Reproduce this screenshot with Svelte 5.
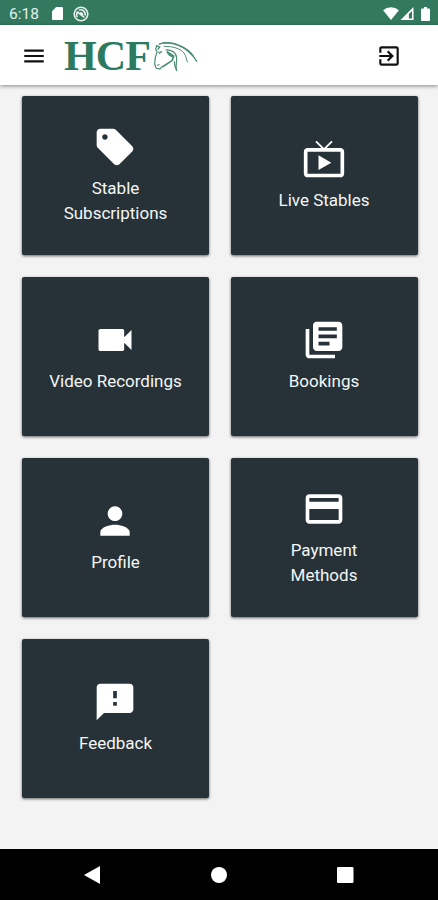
<script>
    const tiles = [
        {
            label: 'Stable Subscriptions',
            icon: 'M21.41 11.58l-9-9C12.05 2.22 11.55 2 11 2H4c-1.1 0-2 .9-2 2v7c0 .55.22 1.05.59 1.42l9 9c.36.36.86.58 1.41.58.55 0 1.05-.22 1.41-.59l7-7c.37-.36.59-.86.59-1.41 0-.55-.23-1.06-.59-1.42zM6.5 8C5.67 8 5 7.33 5 6.5S5.67 5 6.5 5 8 5.67 8 6.5 7.33 8 6.5 8z'
        },
        {
            label: 'Live Stables',
            icon: 'M21 6h-7.59l3.29-3.29L16 2l-4 4-4-4-.7.71L10.59 6H3c-1.1 0-2 .89-2 2v12c0 1.1.9 2 2 2h18c1.1 0 2-.9 2-2V8c0-1.11-.9-2-2-2zm0 14H3V8h18v12zM9 10v8l7-4z'
        },
        {
            label: 'Video Recordings',
            icon: 'M17 10.5V7c0-.55-.45-1-1-1H4c-.55 0-1 .45-1 1v10c0 .55.45 1 1 1h12c.55 0 1-.45 1-1v-3.5l4 4v-11l-4 4z'
        },
        {
            label: 'Bookings',
            icon: 'M4 6H2v14c0 1.1.9 2 2 2h14v-2H4V6zm16-4H8c-1.1 0-2 .9-2 2v12c0 1.1.9 2 2 2h12c1.1 0 2-.9 2-2V4c0-1.1-.9-2-2-2zm-1 9H9V9h10v2zm-4 4H9v-2h6v2zm4-8H9V5h10v2z'
        },
        {
            label: 'Profile',
            icon: 'M12 12c2.21 0 4-1.79 4-4s-1.79-4-4-4-4 1.79-4 4 1.79 4 4 4zm0 2c-2.67 0-8 1.34-8 4v2h16v-2c0-2.66-5.33-4-8-4z'
        },
        {
            label: 'Payment Methods',
            icon: 'M20 4H4c-1.11 0-1.99.89-1.99 2L2 18c0 1.11.89 2 2 2h16c1.11 0 2-.89 2-2V6c0-1.11-.89-2-2-2zm0 14H4v-6h16v6zm0-10H4V6h16v2z'
        },
        {
            label: 'Feedback',
            icon: 'M20 2H4c-1.1 0-1.99.9-1.99 2L2 22l4-4h14c1.1 0 2-.9 2-2V4c0-1.1-.9-2-2-2zm-7 12h-2v-2h2v2zm0-4h-2V6h2v4z'
        }
    ];
</script>

<div class="screen">
    <div class="status">
        <span class="time">6:18</span>
        <svg class="sd" width="11" height="13" viewBox="0 0 12 14"><path d="M4.5 0H11q1 0 1 1v12q0 1-1 1H1q-1 0-1-1V4.5z"/></svg>
        <svg class="sync" width="16" height="16" viewBox="0 0 16 16">
            <circle cx="8" cy="8" r="6.8"/>
            <path d="M4.6 11A4.3 4.3 0 0 1 4.4 6l7 5.4M6 4.3A4.3 4.3 0 0 1 12 9.4M7 7.2a1.7 1.7 0 0 1 2.6 1.7"/>
        </svg>
        <span class="spacer"></span>
        <svg width="16" height="13" viewBox="0 0 17 14"><path d="M8.5 14L0 3.6Q3.5.4 8.5.4T17 3.6z"/></svg>
        <svg class="signal" width="14" height="13" viewBox="0 0 14 14"><path d="M14 0v14H0zM12.4 4.2L9 7.6v4.8h3.4z" fill-rule="evenodd"/></svg>
        <svg class="battery" width="9" height="14" viewBox="0 0 9 14"><path d="M3 0h3v1.5h2q1 0 1 1V13q0 1-1 1H1q-1 0-1-1V2.5q0-1 1-1h2z"/></svg>
    </div>

    <header>
        <button aria-label="Menu">
            <svg width="26" height="26" viewBox="0 0 24 24"><path d="M3 18h18v-2H3v2zm0-5h18v-2H3v2zm0-7v2h18V6H3z"/></svg>
        </button>
        <svg class="logo" width="136" height="54" viewBox="0 0 136 54">
            <text x="0" y="41" textLength="87">HCF</text>
            <g transform="translate(36 1) scale(.3333)">
                <path d="M171 45L167 57L171 66C166 78 164 90 164 102L168 114L180 117L187 108" stroke-width="3.5"/>
                <path d="M168 47l11 4-6 8M176 43c18-7 43-5 60 3 26 11 43 29 55 49" stroke-width="4"/>
                <path d="M188 39c35-4 75 13 92 39" stroke-width="4"/>
                <path d="M191 49c28 0 49 6 61 20 7 9 6 19 11 28" stroke-width="3"/>
                <path d="M197 59c17 1 31 9 33 23 1 12-4 20 0 41-5-10-7-16-7-29" stroke-width="3.5"/>
                <path d="M200 64l21 14-4 13-30 20M202 65c2 9 9 13 17 16" stroke-width="5"/>
                <path d="M174 67l12-2-9 7M171 106l8-2" stroke-width="3"/>
            </g>
        </svg>
        <span class="spacer"></span>
        <button aria-label="Log out">
            <svg width="26" height="26" viewBox="0 0 24 24"><path d="M10.09 15.59L11.5 17l5-5-5-5-1.41 1.41L12.67 11H3v2h9.67l-2.58 2.59zM19 3H5c-1.11 0-2 .9-2 2v4h2V5h14v14H5v-4H3v4c0 1.1.89 2 2 2h14c1.1 0 2-.9 2-2V5c0-1.1-.9-2-2-2z"/></svg>
        </button>
    </header>

    <main>
        {#each tiles as tile}
            <div class="tile">
                <svg width="44" height="44" viewBox="0 0 24 24"><path d={tile.icon}/></svg>
                <span>{tile.label}</span>
            </div>
        {/each}
    </main>

    <nav>
        <svg width="18" height="20" viewBox="0 0 18 20"><path d="M17 1v18L1 10z"/></svg>
        <svg width="18" height="20" viewBox="0 0 18 20"><circle cx="9" cy="10" r="8"/></svg>
        <svg width="18" height="20" viewBox="0 0 18 20"><rect x="1" y="2" width="16.5" height="16" rx="1"/></svg>
    </nav>
</div>

<style>
    :global(body) {
        margin: 0;
    }
    .screen {
        display: flex;
        flex-direction: column;
        height: 900px;
        background-color: #f3f3f3;
        font-family: Roboto, sans-serif;
    }
    svg {
        display: block;
        flex: none;
    }
    .spacer {
        flex: 1;
    }
    .status {
        display: flex;
        align-items: center;
        box-sizing: border-box;
        height: 25px;
        padding: 2px 8px 0 9px;
        background-color: #33795f;
        color: #e6f0ec;
        fill: #fff;
    }
    .time {
        width: 43px;
        font-size: 15.5px;
    }
    .sync {
        margin-left: 10px;
        fill: none;
        stroke: #e6f0ec;
        stroke-width: 1.6;
    }
    .signal {
        margin-left: 1px;
    }
    .battery {
        margin-left: 7px;
    }
    header {
        display: flex;
        align-items: center;
        box-sizing: border-box;
        height: 60px;
        padding: 1px 36px 0 21px;
        background-color: #fff;
        box-shadow: 0 1px 4px rgba(0,0,0,0.45);
    }
    button {
        padding: 0;
        border: 0;
        background: none;
        fill: #111;
    }
    .logo {
        margin-left: 17px;
        fill: #2c7b60;
    }
    .logo text {
        font-family: "Liberation Serif", serif;
        font-size: 42px;
        font-weight: bold;
    }
    .logo g {
        fill: none;
        stroke: #4a8d76;
    }
    main {
        flex: 1;
        display: grid;
        grid-template-columns: 187px 187px;
        grid-auto-rows: 159px;
        gap: 22px 21.5px;
        padding: 11px 22px 0;
    }
    .tile {
        display: flex;
        flex-direction: column;
        align-items: center;
        justify-content: center;
        gap: 7px;
        border-radius: 2px;
        background-color: #263238;
        box-shadow: 0 1px 3px rgba(0,0,0,0.6);
        color: #f4f6f6;
        fill: #fff;
    }
    .tile svg {
        margin-right: 1px;
    }
    .tile span {
        max-width: 135px;
        font-size: 17px;
        line-height: 25.5px;
        text-align: center;
    }
    nav {
        display: flex;
        align-items: center;
        justify-content: space-between;
        box-sizing: border-box;
        height: 51px;
        padding: 1px 84px 0 83px;
        background-color: #000;
        fill: #fff;
    }
</style>
